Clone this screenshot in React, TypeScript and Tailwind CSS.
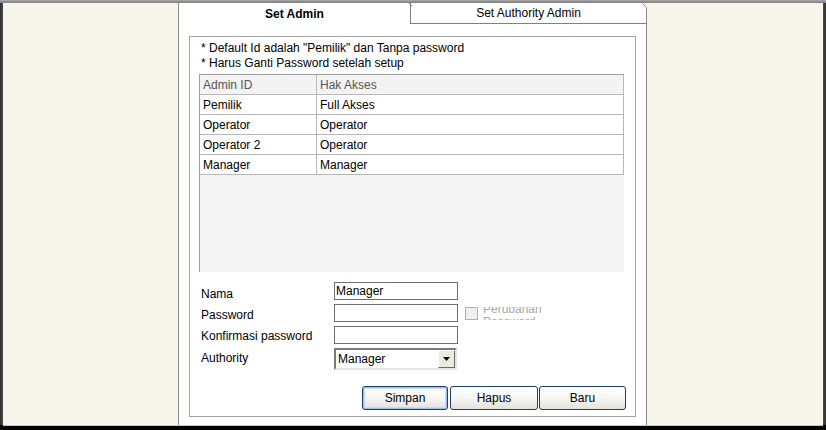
import React from 'react';

const rows: [string, string][] = [
    ['Pemilik', 'Full Akses'],
    ['Operator', 'Operator'],
    ['Operator 2', 'Operator'],
    ['Manager', 'Manager'],
];

const TextBox: React.FC<{ value?: string }> = ({ value = '' }) => (
    <div className="w-[124px] h-[18px] border border-[#6f6f6f] bg-white pl-[1px] flex items-center text-black leading-none">{value}</div>
);

const FormRow: React.FC<{ label: string; className?: string; labelClass?: string; children: React.ReactNode }> = ({ label, className = '', labelClass = '', children }) => (
    <div className={`flex items-center ${className}`}>
        <div className={`w-[133px] text-black ${labelClass}`}>{label}</div>
        {children}
    </div>
);

const Button: React.FC<{ label: string; primary?: boolean; className?: string }> = ({ label, primary = false, className = '' }) => (
    <button
        className={`h-[24px] rounded-[3px] border border-[#1d3e66] bg-gradient-to-b from-white via-[#f6f6f3] to-[#e3e2dc] text-black text-[12px] flex items-center justify-center ${primary ? 'shadow-[inset_0_0_0_1px_#9ec0ec,inset_0_0_0_2px_#c6daf5]' : ''} ${className}`}
    >
        {label}
    </button>
);

export default function App() {
    return (
        <div className="w-[826px] h-[430px] flex flex-col bg-black font-['Liberation_Sans',Arial,sans-serif] text-[12px] overflow-hidden">
            <div className="h-[3px] bg-gradient-to-b from-[#a9a9a9] to-[#7c7c7c]" />
            <div className="h-[422px] flex">
                <div className="w-[3px] bg-gradient-to-r from-[#2e2e2e] to-[#4a4a4a]" />
                <div className="w-[175px] bg-[#f8f6ea]" />

                {/* centre panel */}
                <div className="w-[469px] bg-white border-l border-r border-[#8a8a8a] flex flex-col relative">
                    <div className="h-[21px] flex">
                        <div className="w-[231px] flex items-center justify-center font-bold text-black">Set Admin</div>
                        <div className="relative flex-1 border-l border-b border-[#808080] flex items-center justify-center text-black">
                            Set Authority Admin
                            <svg className="absolute -left-[2px] top-0" width="4" height="4" viewBox="0 0 4 4">
                                <path d="M0 0 L3 3" stroke="#808080" strokeWidth="1" />
                            </svg>
                        </div>
                    </div>
                    <svg className="absolute -right-[1px] top-0" width="5" height="5" viewBox="0 0 5 5">
                        <path d="M0 0 L5 0 L5 5 Z" fill="#f8f6ea" />
                        <path d="M0.5 0.5 L4.5 4.5" stroke="#8a8a8a" strokeWidth="1" />
                    </svg>

                    {/* group box */}
                    <div className="mt-[12px] ml-[10px] w-[447px] h-[381px] border border-[#a3a3a3] flex flex-col">
                        <div className="pl-[11px] pt-[4px] leading-[15px] text-black">
                            <div>* Default Id adalah "Pemilik" dan Tanpa password</div>
                            <div>* Harus Ganti Password setelah setup</div>
                        </div>

                        <div className="mt-[3px] ml-[9px] w-[425px] border-l border-t border-[#a0a0a0]">
                            <div className="h-[20px] flex border-b border-r border-[#b8b8b8] bg-[#f3f3f3] text-[#555]">
                                <div className="w-[117px] pl-[3px] flex items-center border-r border-[#b8b8b8]">Admin ID</div>
                                <div className="flex-1 pl-[3px] flex items-center">Hak Akses</div>
                            </div>
                            {rows.map(([id, akses]) => (
                                <div key={id} className="h-[20px] flex border-b border-r border-[#b8b8b8] text-black">
                                    <div className="w-[117px] pl-[3px] flex items-center border-r border-[#b8b8b8]">{id}</div>
                                    <div className="flex-1 pl-[3px] flex items-center">{akses}</div>
                                </div>
                            ))}
                            <div className="h-[97px] bg-[#f4f4f4]" />
                        </div>

                        <div className="pl-[11px] mt-[10px] flex flex-col">
                            <FormRow label="Nama" className="h-[18px]" labelClass="mt-[5px]">
                                <TextBox value="Manager" />
                            </FormRow>
                            <FormRow label="Password" className="h-[18px] mt-[4px]" labelClass="mt-[3px]">
                                <TextBox />
                                <div className="ml-[7px] w-[13px] h-[13px] border border-[#b0b0b0] bg-[#f0f0f0]" />
                                <div className="ml-[5px] h-[13px] overflow-hidden text-[#a8a8a8] leading-[13px]">
                                    <div className="-mt-[4px]">
                                        <div>Perubahan</div>
                                        <div>Password</div>
                                    </div>
                                </div>
                            </FormRow>
                            <FormRow label="Konfirmasi password" className="h-[19px] mt-[3px]" labelClass="mt-[2px]">
                                <TextBox />
                            </FormRow>
                            <FormRow label="Authority" className="h-[22px] mt-[4px]" labelClass="-mt-[2px]">
                                <div className="w-[123px] h-[22px] border-2 border-t-[#7a7a7a] border-l-[#7a7a7a] border-b-[#e4e4e4] border-r-[#e4e4e4] bg-white flex items-center">
                                    <div className="flex-1 pl-[2px] text-black">Manager</div>
                                    <div className="w-[17px] h-[18px] bg-[#eceae2] border border-t-white border-l-white border-b-[#6a6a6a] border-r-[#6a6a6a] flex items-center justify-center">
                                        <svg width="7" height="4" viewBox="0 0 7 4">
                                            <path d="M0 0 L7 0 L3.5 4 Z" fill="#000" />
                                        </svg>
                                    </div>
                                </div>
                            </FormRow>
                        </div>

                        <div className="mt-[16px] flex justify-end pr-[9px]">
                            <Button label="Simpan" primary className="w-[86px]" />
                            <Button label="Hapus" className="w-[88px] ml-[2px]" />
                            <Button label="Baru" className="w-[87px] ml-[1px]" />
                        </div>
                    </div>
                </div>

                <div className="w-[176px] bg-[#f8f6ea]" />
                <div className="w-[3px] bg-gradient-to-l from-[#2e2e2e] to-[#4a4a4a]" />
            </div>
            <div className="h-[1px] bg-[#c8c8c8] mx-[3px]" />
            <div className="h-[4px] bg-black" />
        </div>
    );
}
